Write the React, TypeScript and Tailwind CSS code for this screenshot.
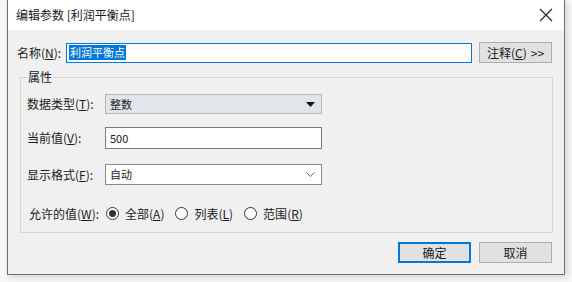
import React, { useState } from "react";

const font = { fontFamily: '"Noto Sans CJK SC", "Noto Sans", sans-serif' };

// Mnemonic letter with underline, e.g. (N)
function Key({ k }: { k: string }) {
  return (
    <>
      (<span className="underline underline-offset-[1px]">{k}</span>)
    </>
  );
}

function Radio({ checked, label, k }: { checked?: boolean; label: string; k: string }) {
  return (
    <div className="flex items-center">
      <span className="flex h-[13px] w-[13px] items-center justify-center rounded-full border border-[#333] bg-white">
        {checked && <span className="h-[7px] w-[7px] rounded-full bg-[#333]" />}
      </span>
      <span className="ml-[6px]">
        {label}
        <Key k={k} />
      </span>
    </div>
  );
}

export default function App() {
  const [allowed, setAllowed] = useState("all");

  return (
    <div
      className="relative h-[282px] w-[572px] overflow-hidden bg-[#f7f7f7] text-[12px] leading-none text-[#1a1a1a]"
      style={font}
    >
      {/* dialog window */}
      <div className="ml-[7px] flex h-[275px] w-[558px] flex-col border border-t-0 border-[#6e6e6e] shadow-[2px_2px_6px_rgba(0,0,0,0.15)]">
        {/* title bar */}
        <div className="flex h-[30px] items-center justify-between bg-white pl-[8px] pr-[9px]">
          <span className="text-[12px]">编辑参数 [利润平衡点]</span>
          <svg width="14" height="14" viewBox="0 0 14 14" className="mr-[2px]">
            <path d="M1 1 L13 13 M13 1 L1 13" stroke="#222" strokeWidth="1.1" />
          </svg>
        </div>

        {/* body */}
        <div className="flex flex-1 flex-col bg-[#f0f0f0] pt-[12px]">
          {/* name row */}
          <div className="flex items-center pl-[9px]">
            <span className="w-[49px]">
              名称
              <Key k="N" />:
            </span>
            <div className="flex h-[20px] w-[406px] items-center border border-[#0078d7] bg-[#fffefa] pl-[2px]">
              <span className="bg-[#0078d7] px-[1px] py-[2px] text-[11px] text-white">利润平衡点</span>
            </div>
            <button className="ml-[7px] flex h-[21px] w-[73px] items-center justify-center border border-[#adadad] bg-[#e1e1e1]">
              注释
              <Key k="C" />
              <span className="ml-[4px]">&gt;&gt;</span>
            </button>
          </div>

          {/* group box */}
          <div className="relative ml-[12px] mt-[14px] h-[156px] w-[533px] border border-[#d5d5d5]">
            <span className="absolute -top-[7px] left-[5px] bg-[#f0f0f0] px-[2px]">属性</span>

            <div className="flex flex-col pl-[6px] pt-[16px]">
              <div className="flex items-center">
                <span className="w-[78px]">
                  数据类型
                  <Key k="T" />:
                </span>
                <div className="flex h-[20px] w-[217px] items-center justify-between border border-[#a9b6c4] bg-[#e2e6eb] pl-[4px] pr-[6px] text-[11px]">
                  <span>整数</span>
                  <svg width="9" height="5" viewBox="0 0 9 5">
                    <path d="M0 0 H9 L4.5 5 Z" fill="#111" />
                  </svg>
                </div>
              </div>

              <div className="mt-[13px] flex items-center">
                <span className="w-[78px]">
                  当前值
                  <Key k="V" />:
                </span>
                <div className="flex h-[22px] w-[217px] items-center border border-[#7a7a7a] bg-white pl-[4px] text-[11px]">
                  500
                </div>
              </div>

              <div className="mt-[15px] flex items-center">
                <span className="w-[78px]">
                  显示格式
                  <Key k="F" />:
                </span>
                <div className="flex h-[21px] w-[217px] items-center justify-between border border-[#8a8a8a] bg-white pl-[4px] pr-[6px] text-[11px]">
                  <span>自动</span>
                  <svg width="9" height="5" viewBox="0 0 9 5">
                    <path d="M0.5 0.5 L4.5 4.5 L8.5 0.5" fill="none" stroke="#666" strokeWidth="1" />
                  </svg>
                </div>
              </div>

              <div className="mt-[22px] flex items-center">
                <span className="w-[79px] pl-[2px]">
                  允许的值
                  <Key k="W" />:
                </span>
                <div className="flex items-center gap-[11px]">
                  <div onClick={() => setAllowed("all")}>
                    <Radio checked={allowed === "all"} label="全部" k="A" />
                  </div>
                  <div onClick={() => setAllowed("list")}>
                    <Radio checked={allowed === "list"} label="列表" k="L" />
                  </div>
                  <div onClick={() => setAllowed("range")}>
                    <Radio checked={allowed === "range"} label="范围" k="R" />
                  </div>
                </div>
              </div>
            </div>
          </div>

          {/* buttons */}
          <div className="mt-[9px] flex justify-end gap-[8px] pr-[12px]">
            <button className="flex h-[21px] w-[73px] items-center justify-center border-2 border-[#0078d7] bg-[#e1e1e1]">
              确定
            </button>
            <button className="flex h-[21px] w-[73px] items-center justify-center border border-[#adadad] bg-[#e1e1e1]">
              取消
            </button>
          </div>
        </div>
      </div>
    </div>
  );
}
